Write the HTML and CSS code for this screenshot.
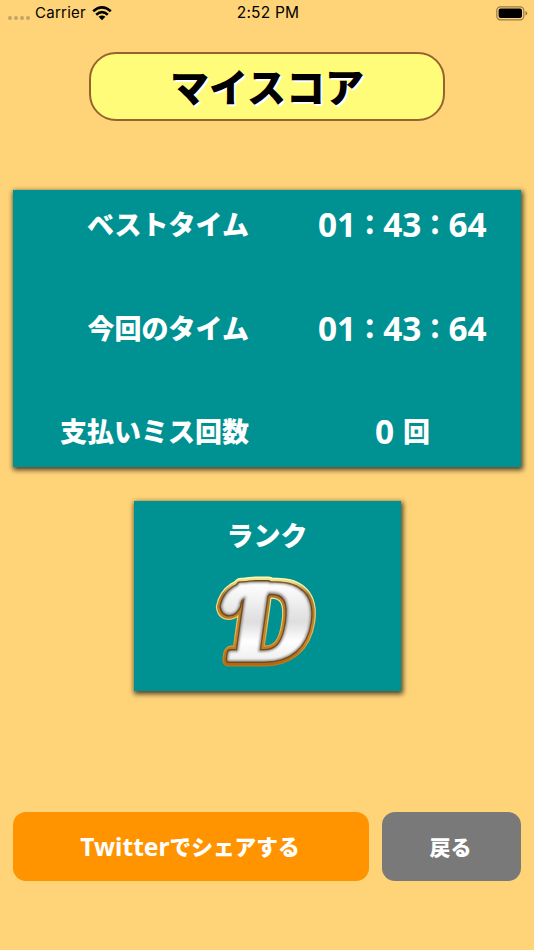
FILE: index.html
```html
<!DOCTYPE html>
<html lang="ja">
<head>
<meta charset="utf-8">
<title>マイスコア</title>
<link rel="stylesheet" href="styles.css">
</head>
<body>
<header class="status">
  <div class="carrier">
    <span class="dots"><i></i><i></i><i></i><i></i></span>
    <span class="carrier-name">Carrier</span>
    <svg class="wifi" viewBox="0 0 20 15" width="20" height="15">
      <g fill="none" stroke="#000" stroke-width="2.6">
        <path d="M1.2 5.3Q10-2.4 18.8 5.3"/>
        <path d="M4.2 8.7Q10 3.6 15.8 8.7"/>
      </g>
      <path d="M6.6 10.8Q10 8 13.4 10.8L10 14.3Z"/>
    </svg>
  </div>
  <time class="clock">2:52 PM</time>
  <svg class="battery" viewBox="0 0 32 15" width="32" height="15">
    <rect x=".8" y=".8" width="27" height="13" rx="3.6" fill="none" stroke="#000" stroke-opacity=".42" stroke-width="1.2"/>
    <rect x="2.6" y="2.6" width="23.4" height="9.4" rx="2"/>
    <path d="M29.5 5Q31.2 5.5 31.2 7.3T29.5 9.6Z" fill-opacity=".45"/>
  </svg>
</header>
<main class="screen">
  <h1 class="title">マイスコア</h1>
  <section class="panel scores">
    <div class="row"><span class="label">ベストタイム</span><span class="value"><b>01</b>：<b>43</b>：<b>64</b></span></div>
    <div class="row"><span class="label">今回のタイム</span><span class="value"><b>01</b>：<b>43</b>：<b>64</b></span></div>
    <div class="row"><span class="label">支払いミス回数</span><span class="value count"><b>0</b><span class="unit">回</span></span></div>
  </section>
  <section class="panel rank">
    <h2 class="rank-title">ランク</h2>
    <svg class="medal" viewBox="0 0 110 104" width="110" height="104">
      <defs>
        <linearGradient id="gold" gradientUnits="userSpaceOnUse" x1="0" y1="-83" x2="0" y2="10">
          <stop offset="0" stop-color="#f4efa0"/><stop offset=".07" stop-color="#e6d984"/>
          <stop offset=".2" stop-color="#a97a34"/><stop offset=".7" stop-color="#c98226"/><stop offset="1" stop-color="#a9630e"/>
        </linearGradient>
        <linearGradient id="rim" gradientUnits="userSpaceOnUse" x1="0" y1="-83" x2="0" y2="10">
          <stop offset="0" stop-color="#fffbb8"/><stop offset=".5" stop-color="#f3c55e"/><stop offset="1" stop-color="#b87018"/>
        </linearGradient>
        <linearGradient id="silver" gradientUnits="userSpaceOnUse" x1="0" y1="-76" x2="0" y2="2">
          <stop offset="0" stop-color="#fff"/><stop offset=".5" stop-color="#dedede"/><stop offset=".75" stop-color="#fff"/><stop offset="1" stop-color="#eee"/>
        </linearGradient>
        <g id="curl"><circle cx="-2" cy="-53" r="6.5"/><path d="M32-75H20C3-75-8-68-9-53L-2-49L5-53Q4-62 12-64L32-65Z"/></g>
      </defs>
      <g transform="translate(13 89) skewX(-8)">
        <g class="layer rim"><use href="#curl"/><text textLength="82" lengthAdjust="spacingAndGlyphs">D</text></g>
        <g class="layer gold" aria-hidden="true"><use href="#curl"/><text textLength="82" lengthAdjust="spacingAndGlyphs">D</text></g>
        <g class="layer edge" aria-hidden="true"><use href="#curl"/><text textLength="82" lengthAdjust="spacingAndGlyphs">D</text></g>
        <g class="layer shade" aria-hidden="true"><use href="#curl"/><text textLength="82" lengthAdjust="spacingAndGlyphs">D</text></g>
        <g class="layer face" aria-hidden="true"><use href="#curl"/><text textLength="82" lengthAdjust="spacingAndGlyphs">D</text></g>
      </g>
    </svg>
  </section>
  <div class="actions">
    <button class="btn share"><span class="latin">Twitter</span>でシェアする</button>
    <button class="btn back">戻る</button>
  </div>
</main>
</body>
</html>
```
FILE: styles.css
```css
* { box-sizing: border-box; }
body {
  margin: 0;
  height: 950px;
  overflow: hidden;
  background: #ffd479;
  color: #fff;
  font-family: "Noto Sans CJK JP", sans-serif;
  font-weight: 900;
}
.status {
  display: grid;
  grid-template-columns: 1fr auto 1fr;
  align-items: center;
  height: 26px;
  padding: 0 6px 0 8px;
  color: #000;
  font: 400 15px/26px Inter, sans-serif;
}
.carrier { display: flex; align-items: center; }
.dots { display: flex; gap: 2px; margin: 9px 5px 0 0; }
.dots i { width: 4px; height: 4px; border-radius: 50%; background: #c4a566; }
.carrier-name { font-size: 15px; letter-spacing: .25px; }
.wifi { margin-left: 6px; }
.clock { font-size: 15.5px; letter-spacing: .2px; }
.battery { justify-self: end; }
.screen { display: flex; flex-direction: column; align-items: center; padding: 26px 13px 0; }
.title {
  display: flex;
  align-items: center;
  justify-content: center;
  width: 356px;
  height: 69px;
  margin: 0;
  padding-bottom: 3px;
  border: 2.5px solid #96632f;
  border-radius: 27px;
  background: #fffc79;
  color: #000;
  font-size: 39px;
  line-height: 1;
  font-weight: 900;
  text-shadow: 2px 2px 0 #fff;
}
.panel { background: #009193; box-shadow: 1px 2px 5px 1px rgba(0, 0, 0, .7); }
.scores {
  display: flex;
  flex-direction: column;
  justify-content: space-between;
  width: 508px;
  height: 277px;
  margin-top: 69px;
  padding: 14px 0 16px;
}
.row {
  display: grid;
  grid-template-columns: 236px 1fr;
  column-gap: 36px;
  align-items: center;
  height: 40px;
  font-size: 27px;
  line-height: 38px;
}
.label { text-align: right; }
.value { display: flex; width: 236px; padding-left: 33px; }
.value b { font: 700 33.4px/38px "Noto Sans", sans-serif; }
.row .count { padding-left: 90px; gap: 9px; }
.rank {
  display: flex;
  flex-direction: column;
  align-items: center;
  width: 267px;
  height: 190px;
  margin-top: 34px;
  padding-top: 14px;
}
.rank-title { margin: 0; font-size: 27px; line-height: 40px; font-weight: 900; }
.medal { margin-top: 15px; overflow: visible; }
.layer { stroke-linejoin: round; }
.layer text { font: 700 101px "DejaVu Serif", serif; }
.rim { fill: url(#rim); stroke: url(#rim); stroke-width: 15px; }
.gold { fill: url(#gold); stroke: url(#gold); stroke-width: 12.5px; }
.edge { fill: #704414; stroke: #704414; stroke-width: 8px; }
.shade { fill: #8e8b89; stroke: #8e8b89; stroke-width: 5px; }
.face { fill: url(#silver); stroke: url(#silver); stroke-width: 2.5px; filter: blur(.8px); }
.actions { display: flex; gap: 13px; width: 508px; margin-top: 121px; }
.btn {
  display: flex;
  align-items: center;
  justify-content: center;
  height: 69px;
  padding: 0 2px 2px 0;
  border: 0;
  border-radius: 13px;
  color: #fff;
  font: 900 21.7px/30px "Noto Sans CJK JP", sans-serif;
}
.share { width: 356px; background: #ff9300; }
.back { width: 139px; background: #797979; font-size: 21px; }
.latin { padding-top: 2px; font: 700 24.6px/30px "Noto Sans", sans-serif; }
```
